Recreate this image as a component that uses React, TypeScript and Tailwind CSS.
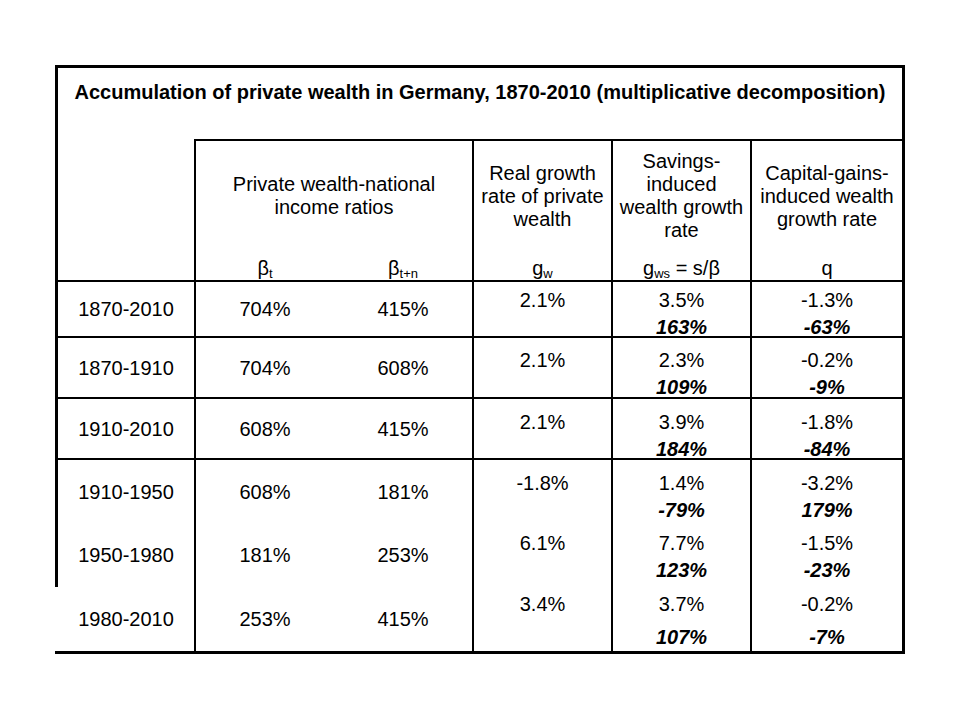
const font = "font-['Liberation_Sans',Arial,sans-serif]";

type Row = {
  period: string;
  bt: string;
  btn: string;
  gw: string;
  gws: string;
  gwsShare: string;
  q: string;
  qShare: string;
  pt: string; // top padding of the value stacks
  gap: string; // gap between value and share
};

// Rows that each sit in their own bordered band
const bandRows: (Row & { h: string })[] = [
  { period: "1870-2010", bt: "704%", btn: "415%", gw: "2.1%", gws: "3.5%", gwsShare: "163%", q: "-1.3%", qShare: "-63%", pt: "pt-[8px]", gap: "mt-[7px]", h: "h-[54px]" },
  { period: "1870-1910", bt: "704%", btn: "608%", gw: "2.1%", gws: "2.3%", gwsShare: "109%", q: "-0.2%", qShare: "-9%", pt: "pt-[12px]", gap: "mt-[7px]", h: "h-[61px] border-t-2" },
  { period: "1910-2010", bt: "608%", btn: "415%", gw: "2.1%", gws: "3.9%", gwsShare: "184%", q: "-1.8%", qShare: "-84%", pt: "pt-[13px]", gap: "mt-[7px]", h: "h-[61px] border-t-2" },
];

// Sub-periods grouped in the last band, no lines between them
const subRows: (Row & { h: string; edge: string })[] = [
  { period: "1910-1950", bt: "608%", btn: "181%", gw: "-1.8%", gws: "1.4%", gwsShare: "-79%", q: "-3.2%", qShare: "179%", pt: "pt-[13px]", gap: "mt-[7px]", h: "h-[63px]", edge: "border-black" },
  { period: "1950-1980", bt: "181%", btn: "253%", gw: "6.1%", gws: "7.7%", gwsShare: "123%", q: "-1.5%", qShare: "-23%", pt: "pt-[10px]", gap: "mt-[7px]", h: "h-[64px]", edge: "border-black" },
  { period: "1980-2010", bt: "253%", btn: "415%", gw: "3.4%", gws: "3.7%", gwsShare: "107%", q: "-0.2%", qShare: "-7%", pt: "pt-[7px]", gap: "mt-[13px]", h: "h-[64px]", edge: "border-transparent" },
];

const Cells = ({ row, edge }: { row: Row; edge: string }) => (
  <>
    <div className={`w-[139px] border-l-[3px] ${edge} flex items-center justify-center`}>
      {row.period}
    </div>
    <div className="w-[278px] border-l-2 border-black flex items-center">
      <div className="w-1/2 text-center">{row.bt}</div>
      <div className="w-1/2 text-center">{row.btn}</div>
    </div>
    <div className={`w-[139px] border-l-2 border-black flex flex-col items-center ${row.pt}`}>
      <div className="leading-[20px]">{row.gw}</div>
    </div>
    <div className={`w-[139px] border-l-2 border-black flex flex-col items-center ${row.pt}`}>
      <div className="leading-[20px]">{row.gws}</div>
      <div className={`leading-[20px] font-bold italic ${row.gap}`}>{row.gwsShare}</div>
    </div>
    <div className={`w-[152px] border-l-2 border-black flex flex-col items-center ${row.pt}`}>
      <div className="leading-[20px]">{row.q}</div>
      <div className={`leading-[20px] font-bold italic ${row.gap}`}>{row.qShare}</div>
    </div>
  </>
);

const HeaderCell = ({ width, children, label }: { width: string; children: React.ReactNode; label: React.ReactNode }) => (
  <div className={`${width} border-l-2 border-t-2 border-b-2 border-black flex flex-col`}>
    <div className="flex-1 flex items-center justify-center text-center leading-[23px] pb-[5px]">
      {children}
    </div>
    <div className="h-[24px] leading-[24px] flex">{label}</div>
  </div>
);

export default function App() {
  return (
    <div className={`w-[960px] h-[720px] bg-white text-black text-[20px] ${font} pt-[65px] pl-[55px]`}>
      <div className="w-[850px] border-t-[3px] border-r-[3px] border-b-[3px] border-black">
        {/* Title */}
        <div className="h-[71px] border-l-[3px] border-black pt-[12px] text-center font-bold leading-[24px]">
          Accumulation of private wealth in Germany, 1870-2010 (multiplicative decomposition)
        </div>

        {/* Column headers */}
        <div className="h-[143px] flex">
          <div className="w-[139px] border-l-[3px] border-b-2 border-black" />
          <HeaderCell
            width="w-[278px]"
            label={
              <>
                <div className="w-1/2 text-center">β<sub className="text-[13px]">t</sub></div>
                <div className="w-1/2 text-center">β<sub className="text-[13px]">t+n</sub></div>
              </>
            }
          >
            <div>Private wealth-national<br />income ratios</div>
          </HeaderCell>
          <HeaderCell
            width="w-[139px]"
            label={<div className="w-full text-center">g<sub className="text-[13px]">w</sub></div>}
          >
            <div>Real growth<br />rate of private<br />wealth</div>
          </HeaderCell>
          <HeaderCell
            width="w-[139px]"
            label={<div className="w-full text-center">g<sub className="text-[13px]">ws</sub> = s/β</div>}
          >
            <div>Savings-<br />induced<br />wealth growth<br />rate</div>
          </HeaderCell>
          <HeaderCell
            width="w-[152px]"
            label={<div className="w-full text-center">q</div>}
          >
            <div>Capital-gains-<br />induced wealth<br />growth rate</div>
          </HeaderCell>
        </div>

        {/* Main periods */}
        {bandRows.map((row) => (
          <div key={row.period} className={`flex border-black ${row.h}`}>
            <Cells row={row} edge="border-black" />
          </div>
        ))}

        {/* Sub-periods */}
        <div className="border-t-2 border-black">
          {subRows.map((row) => (
            <div key={row.period} className={`flex ${row.h}`}>
              <Cells row={row} edge={row.edge} />
            </div>
          ))}
        </div>
      </div>
    </div>
  );
}
